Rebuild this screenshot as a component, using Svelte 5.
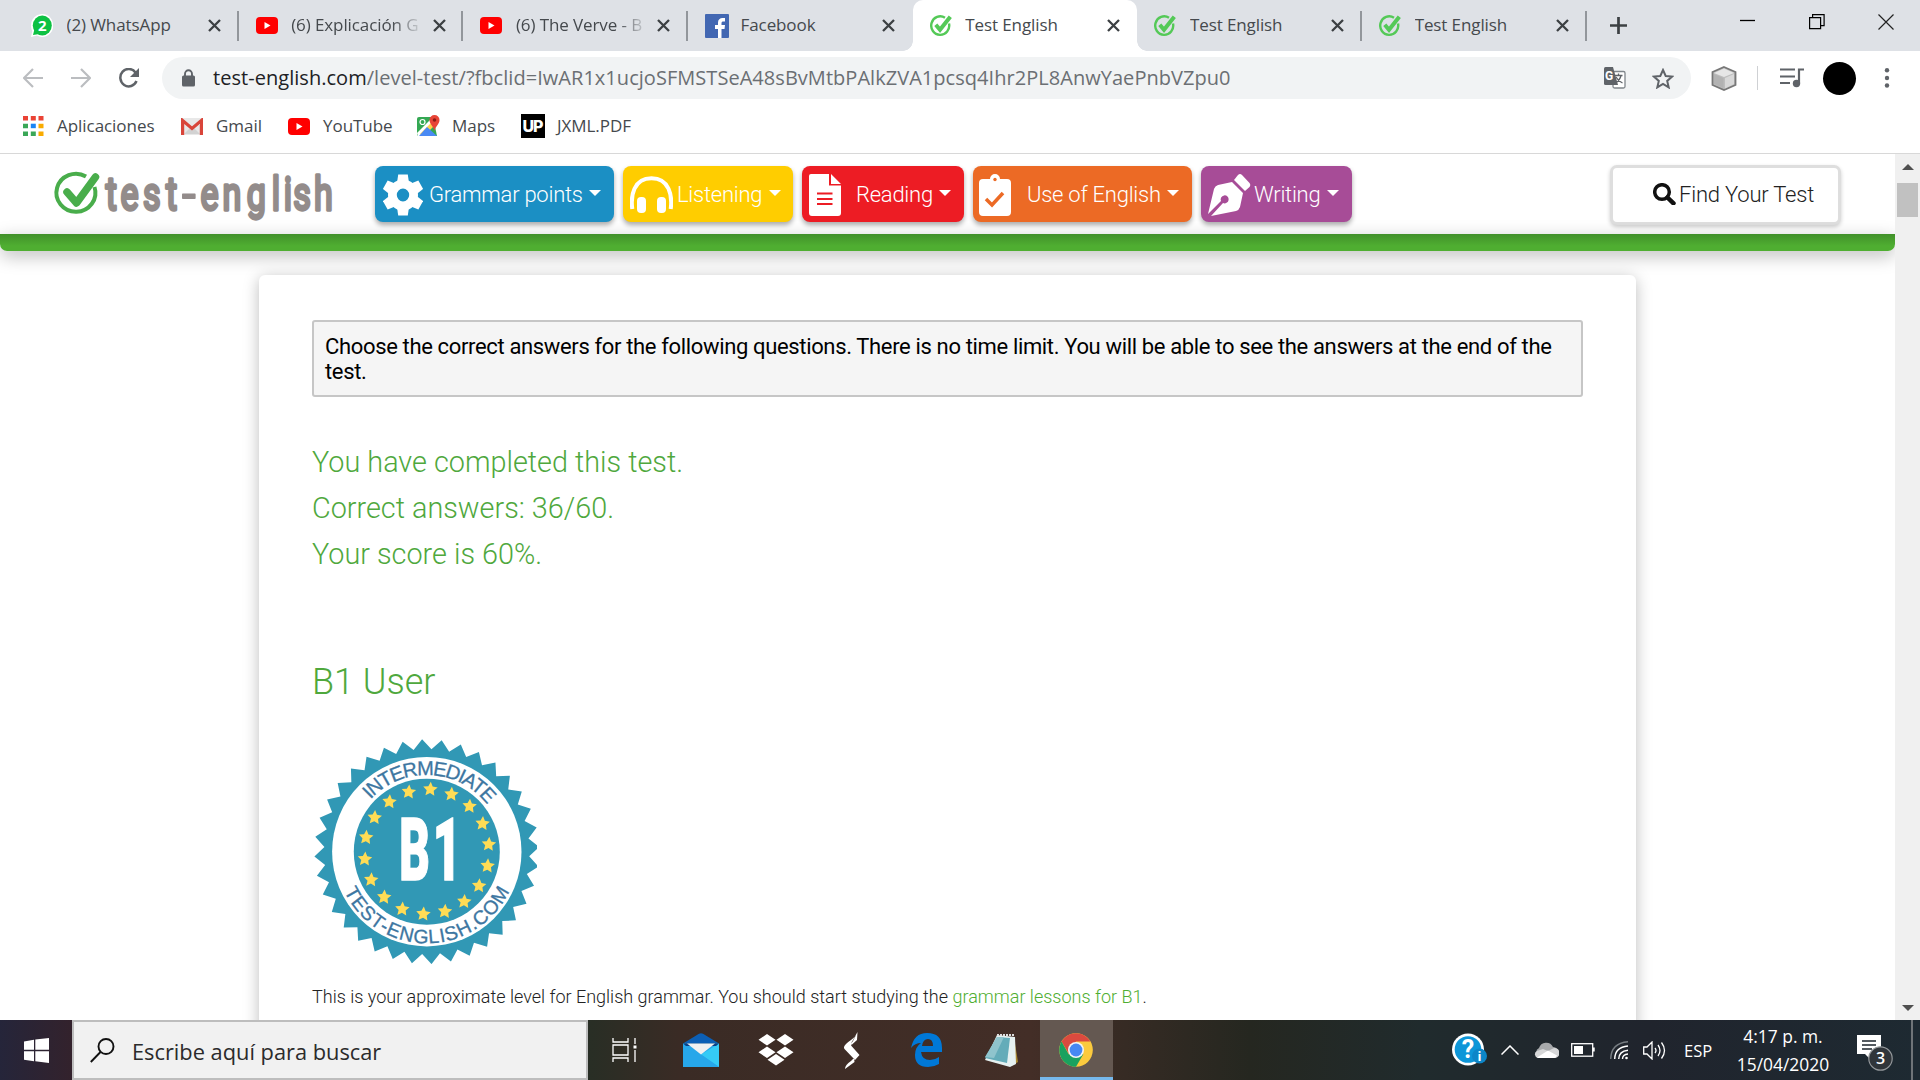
<script>
  const tabs = [
    { title: '(2) WhatsApp', icon: 'whatsapp', sep: true },
    { title: '(6) Explicación G', icon: 'youtube', sep: true, fade: true },
    { title: '(6) The Verve - B', icon: 'youtube', sep: true, fade: true },
    { title: 'Facebook', icon: 'facebook' },
    { title: 'Test English', icon: 'check', active: true },
    { title: 'Test English', icon: 'check', sep: true },
    { title: 'Test English', icon: 'check', sep: true }
  ];
  const bookmarks = [
    { label: 'Aplicaciones', icon: 'apps' },
    { label: 'Gmail', icon: 'gmail' },
    { label: 'YouTube', icon: 'youtube' },
    { label: 'Maps', icon: 'maps' },
    { label: 'JXML.PDF', icon: 'up' }
  ];
  const menu = [
    { label: 'Grammar points', kind: 'grammar' },
    { label: 'Listening', kind: 'listening' },
    { label: 'Reading', kind: 'reading' },
    { label: 'Use of English', kind: 'use' },
    { label: 'Writing', kind: 'writing' }
  ];
  const rad = Math.PI / 180;
  const polar = (r, deg) => [r * Math.sin(deg * rad), -r * Math.cos(deg * rad)];
  const pointList = (pts) => pts.map((p) => p.map((n) => n.toFixed(2)).join(',')).join(' ');
  const teeth = pointList(
    Array.from({ length: 72 }, (_, i) => polar(i % 2 ? 102.5 : 112.5, -2.4 + i * 5))
  );
  const star = pointList(Array.from({ length: 10 }, (_, i) => polar(i % 2 ? 3.7 : 7.6, i * 36)));
  const stars = Array.from({ length: 18 }, (_, i) => polar(62.4, 3.2 + i * 20));
  const gearTeeth = [0, 60, 120, 180, 240, 300];
</script>

{#snippet icon(name)}
  {#if name === 'whatsapp'}
    <svg width="22" height="24" viewBox="0 0 22 24">
      <path d="M11 0a11 11.5 0 1 1-5 21.6L0 23l1.300-6A11 11.500 0 0 1 11 0z" fill="#fff" />
      <ellipse cx="11.300" cy="11.500" rx="9.500" ry="10" fill="#0dc143" /><path d="M2 21l1.500-6 5 5z" fill="#0dc143" />
      <text x="11.300" y="17" text-anchor="middle" font-family="Open Sans" font-weight="700" font-size="15" fill="#fff">2</text>
    </svg>
  {:else if name === 'youtube'}
    <svg width="22" height="17" viewBox="0 0 22 17"><rect width="22" height="17" rx="4" fill="#f00" /><path d="M8.500 5v7l6-3.500z" fill="#fff" /></svg>
  {:else if name === 'facebook'}
    <svg width="24" height="24" viewBox="0 0 24 24"><rect width="24" height="24" rx="1" fill="#4267b2" /><path d="M13 24v-9h-3v-4h3V8.500C13 5.500 15 4 17.500 4H20v3.600h-1.600c-1.400 0-1.900.6-1.900 1.800V11H20l-.5 4h-3v9z" fill="#fff" /></svg>
  {:else if name === 'check'}
    <svg width="22" height="22" viewBox="0 0 22 22" fill="none" stroke="#54c957"><path d="M15 2.700A9 9.300 0 1 0 19 8.500" stroke-width="2.400" /><path d="M5.800 9.800l4.200 5L20.300 1.800" stroke-width="4" /></svg>
  {:else if name === 'apps'}
    <svg width="21" height="20" viewBox="0 0 21 20">
      <path d="M0 0h5v4.500H0zM7.800 0h5v4.500h-5zM15.500 0h5v4.500h-5z" fill="#ea4335" /><path d="M0 7.700h5v4.500H0zM0 15.400h5v4.500H0zM7.800 15.400h5v4.500h-5z" fill="#3aa757" /><path d="M7.800 7.700h5v4.500h-5z" fill="#1a84f5" /><path d="M15.500 7.700h5v4.500h-5zM15.500 15.400h5v4.500h-5z" fill="#f9ab00" />
    </svg>
  {:else if name === 'gmail'}
    <svg width="22" height="17" viewBox="0 0 22 17"><rect width="22" height="17" rx="1.500" fill="#e8e8e8" /><path d="M3 16l8-8 8 8z" fill="#d2d2d2" /><path d="M1.600 17V2.500L11 10.500l9.400-8V17" fill="none" stroke="#d9453a" stroke-width="3.200" /></svg>
  {:else if name === 'maps'}
    <svg width="23" height="23" viewBox="0 0 23 23">
      <path d="M2 2h14l4 19H2a2 2 0 0 1-2-2V4a2 2 0 0 1 2-2z" fill="#34a853" /><path d="M0 18L14 4l4 4L4 21H1z" fill="#fff" /><path d="M3 19L16 6l2 4L7 21z" fill="#ffd04c" /><path d="M10 12l10 9H2z" fill="#4a8af4" />
      <path d="M17.500 0a5 5 0 0 1 5 5c0 4-4 6-5 11-1-5-5-7-5-11a5 5 0 0 1 5-5z" fill="#e84436" /><circle cx="17.500" cy="5" r="1.800" fill="#8c1c16" /><circle cx="5.500" cy="7" r="2.500" fill="none" stroke="#fff" stroke-width="1.200" />
    </svg>
  {:else if name === 'up'}
    <svg width="24" height="24" viewBox="0 0 24 24"><rect width="24" height="24" /><text x="12" y="18" text-anchor="middle" font-family="Inter" font-weight="800" font-size="16" fill="#fff" textLength="21">UP</text></svg>
  {:else if name === 'grammar'}
    <svg width="40" height="42" viewBox="-20 -21 40 42" fill="#fff">
      {#each gearTeeth as a}<path d="M-6-12L-4.800-20.500H4.800L6-12z" transform="rotate({a})" />{/each}
      <path fill-rule="evenodd" d="M0-15.500a15 15.500 0 1 1 0 31a15 15.500 0 1 1 0-31zM0-6.500a6.200 6.500 0 1 0 0 13a6.200 6.500 0 1 0 0-13z" />
    </svg>
  {:else if name === 'listening'}
    <svg width="43" height="38" viewBox="0 0 43 38"><path d="M2.300 33C.5 20 3.500 2.300 21.500 2.300S42.500 20 40.700 33" fill="none" stroke="#fff" stroke-width="4" /><rect x="7" y="21" width="9" height="16" rx="4" fill="#fff" /><rect x="27" y="21" width="9" height="16" rx="4" fill="#fff" /></svg>
  {:else if name === 'reading'}
    <svg width="32" height="42" viewBox="0 0 32 42"><path d="M2 0h18v11.500h12V39a3 3 0 0 1-3 3H3a3 3 0 0 1-3-3V2q0-2 2-2zM22 0l10 10H22z" fill="#fff" /><path d="M8 19.500h15.500M8 25h15.500M8 30h15.500" stroke="#ec1c24" stroke-width="2.200" /></svg>
  {:else if name === 'use'}
    <svg width="32" height="42" viewBox="0 0 32 42"><path d="M4 5h7a5 5 0 0 1 10 0h7a4 4 0 0 1 4 4v29a4 4 0 0 1-4 4H4a4 4 0 0 1-4-4V9a4 4 0 0 1 4-4z" fill="#fff" /><circle cx="16" cy="5.500" r="1.700" fill="#ec6a25" /><path d="M7 25l6 6 11-12" fill="none" stroke="#ec6a25" stroke-width="3.500" /></svg>
  {:else if name === 'writing'}
    <svg width="43" height="42" viewBox="0 0 43 42" fill="#fff"><path d="M30 1q2-2 4 0l7.500 8q1.500 2 0 4L37 17 26 6z" /><path fill-rule="evenodd" d="M24 8l11 11-3 14q-1 3-4 4L3 42l12-13a4 4 0 1 0-2-2L0 40 6 15q1-3 4-4z" /></svg>
  {/if}
{/snippet}

<div class="screen">
  <div class="tabstrip">
    {#each tabs as tab}
      <div class="tab" class:active={tab.active} class:sep={tab.sep}>
        <span class="favicon">{@render icon(tab.icon)}</span>
        <span class="title" class:fade={tab.fade}>{tab.title}</span>
        <svg class="close" width="13" height="13" viewBox="0 0 13 13"><path d="M1 1l11 11M12 1L1 12" stroke="#3c4043" stroke-width="2.300" /></svg>
      </div>
    {/each}
    <svg class="newtab" width="19" height="19" viewBox="0 0 19 19"><path d="M9.500 1v17M1 9.500h17" stroke="#3c4043" stroke-width="2.700" /></svg>
    <div class="window-controls">
      <svg width="16" height="16" viewBox="0 0 16 16"><path d="M0 6.500h15" stroke="#000" stroke-width="1.300" /></svg>
      <svg width="16" height="16" viewBox="0 0 16 16" fill="none" stroke="#000" stroke-width="1.200"><path d="M.6 3.600h11v11H.6zM3.600 3.600V.6h11.500v11h-3.500" /></svg>
      <svg width="16" height="16" viewBox="0 0 16 16"><path d="M.5.5l15 15M15.500.5l-15 15" stroke="#222" stroke-width="1.200" /></svg>
    </div>
  </div>

  <div class="toolbar">
    <svg class="back" width="20" height="20" viewBox="0 0 20 20"><path d="M20 10H2M10 1l-9 9 9 9" fill="none" stroke="#bbbdc0" stroke-width="2.200" /></svg>
    <svg class="forward" width="20" height="20" viewBox="0 0 20 20"><path d="M0 10h18M10 1l9 9-9 9" fill="none" stroke="#bbbdc0" stroke-width="2.200" /></svg>
    <svg class="reload" width="22" height="20" viewBox="0 0 22 20"><path d="M17.500 4.500A8.400 8.700 0 1 0 18.500 13" fill="none" stroke="#5f6368" stroke-width="2.500" /><path d="M21 0v9h-9z" fill="#5f6368" /></svg>
    <div class="omnibox">
      <svg width="14" height="18" viewBox="0 0 14 18"><rect y="6.500" width="13" height="11" rx="1.500" fill="#5f6368" /><path d="M3 7V5a3.500 3.700 0 0 1 7 0v2" fill="none" stroke="#5f6368" stroke-width="1.900" /></svg>
      <span class="url"><b>test-english.com</b>/level-test/?fbclid=IwAR1x1ucjoSFMSTSeA48sBvMtbPAlkZVA1pcsq4Ihr2PL8AnwYaePnbVZpu0</span>
      <svg class="translate" width="22" height="22" viewBox="0 0 22 22">
        <rect x="9" y="4.500" width="12" height="16.500" rx="1.500" fill="#fff" stroke="#80868b" stroke-width="1.300" /><path d="M1.500 0H9l5 18H1.500Q0 18 0 16.500v-15Q0 0 1.500 0z" fill="#5f6368" />
        <text x="1" y="13" font-family="Roboto" font-weight="700" font-size="12" fill="#fff">G</text>
        <path d="M10.500 8.500h8M14.500 6.500v2M17 8.500q-1 5-6 7.500M12 10q2 4 6.500 6" fill="none" stroke="#5f6368" stroke-width="1.300" />
      </svg>
      <svg class="bookmark-star" width="22" height="21" viewBox="0 0 22 21"><path d="M11 2l2.700 6 6.500.6-5 4.300 1.500 6.500L11 16l-5.700 3.400 1.500-6.500-5-4.300 6.500-.6z" fill="none" stroke="#5f6368" stroke-width="2" /></svg>
    </div>
    <svg class="cube" width="26" height="25" viewBox="0 0 26 25"><path d="M13 1l11.500 5v13L13 24 1.500 19V6z" fill="#bdbdbd" stroke="#777" stroke-width="1.800" /><path d="M13 2.500L23 7 13 11 3 7z" fill="#e6e6e6" /><path d="M14 12l9-4v10l-9 4.500z" fill="#d8d8d8" /><path d="M3 8l9.500 4v10L3 18z" fill="#b2b2b2" /></svg>
    <span class="divider"></span>
    <svg class="music" width="24" height="20" viewBox="0 0 24 20"><path d="M0 1.500h15M0 8.500h15M0 15h10M19 15V1.500h5" fill="none" stroke="#5f6368" stroke-width="2.200" /><circle cx="16.500" cy="15.500" r="3.700" fill="#5f6368" /></svg>
    <span class="avatar"></span>
    <svg class="dots" width="6" height="20" viewBox="0 0 6 20" fill="#5f6368"><circle cx="3" cy="2.300" r="2.200" /><circle cx="3" cy="10" r="2.200" /><circle cx="3" cy="17.500" r="2.200" /></svg>
  </div>

  <div class="bookmarks">
    {#each bookmarks as item}
      <div class="bookmark {item.icon}"><span class="bm-icon">{@render icon(item.icon)}</span><span>{item.label}</span></div>
    {/each}
  </div>

  <div class="viewport">
    <div class="page">
      <header>
        <svg class="logo" width="290" height="66" viewBox="0 0 290 66">
          <path d="M31 9.500A19.500 19 0 1 0 39.500 20" fill="none" stroke="#49ad4b" stroke-width="4" />
          <path d="M12 25l9.500 11L40.500 10" fill="none" stroke="#49ad4b" stroke-width="7.500" stroke-linecap="round" stroke-linejoin="round" />
          <text class="wordmark" transform="scale(.74 1)" y="43.500" x="68.500 88.500 119 150 171 196.500 226.500 259 293 309 322 350">test<tspan class="dash" dy="7">-</tspan><tspan dy="-7">english</tspan></text>
        </svg>
        <nav>
          {#each menu as item}
            <button class={item.kind}><span class="menu-icon">{@render icon(item.kind)}</span><span class="menu-label">{item.label}</span><i class="caret"></i></button>
          {/each}
        </nav>
        <button class="find">
          <svg width="23" height="22" viewBox="0 0 23 22"><circle cx="9" cy="9" r="7.300" fill="none" stroke="#111" stroke-width="3.500" /><path d="M14.500 14.500l6 5.800" stroke="#111" stroke-width="4.500" stroke-linecap="round" /></svg>
          <span>Find Your Test</span>
        </button>
      </header>
      <div class="green-bar"></div>
      <main>
        <p class="instructions">Choose the correct answers for the following questions. There is no time limit. You will be able to see the answers at the end of the<br />test.</p>
        <div class="results">
          <p>You have completed this test.</p>
          <p>Correct answers: 36/60.</p>
          <p>Your score is 60%.</p>
        </div>
        <h2>B1 User</h2>
        <svg class="badge" width="225" height="225" viewBox="-114.800 -112.700 225 225">
          <defs><path id="arcTop" d="M-76.700 0A76.700 76.700 0 0 1 76.700 0" transform="rotate(2.500)" /><path id="arcBottom" d="M-91.700 0A91.700 91.700 0 0 0 91.700 0" /></defs>
          <polygon points={teeth} fill="#3198b5" />
          <circle r="94.700" fill="#fff" /><circle r="73" fill="#3198b5" />
          {#each stars as [x, y]}<polygon points={star} transform="translate({x} {y}) rotate(4)" fill="#ffdc55" />{/each}
          <text class="ring" font-size="20" text-anchor="middle"><textPath href="#arcTop" startOffset="50%" textLength="133">INTERMEDIATE</textPath></text>
          <text class="ring" font-size="19.500" text-anchor="middle"><textPath href="#arcBottom" startOffset="50%" textLength="206">TEST-ENGLISH.COM</textPath></text>
          <g class="level" font-size="88"><text transform="translate(-27.500 28.500) scale(.54 1)">B</text><text transform="translate(6 28.500) scale(.56 1)">1</text></g>
        </svg>
        <p class="note">This is your approximate level for English grammar. You should start studying the <a>grammar lessons for B1</a>.</p>
      </main>
    </div>
    <div class="scrollbar"><i class="up-arrow"></i><span class="thumb"></span><i class="down-arrow"></i></div>
  </div>

  <div class="taskbar">
    <div class="start"><svg width="25" height="25" viewBox="0 0 25 25" fill="#fff"><path d="M0 3.500l10-1.700v10H0zM11.300 1.600L25 0v11.800H11.300zM0 13.200h10v10L0 21.700zM11.300 13.200H25V25l-13.700-1.700z" /></svg></div>
    <div class="search">
      <svg width="25" height="25" viewBox="0 0 25 25" fill="none" stroke="#111" stroke-width="1.900"><circle cx="16" cy="8.500" r="7.500" /><path d="M10.500 14L.8 24" /></svg>
      <span>Escribe aquí para buscar</span>
    </div>
    <div class="apps">
      <div class="app"><svg width="26" height="24" viewBox="0 0 26 24" fill="none" stroke="#fff" stroke-width="1.300"><path d="M1 0v4h15V0M1 7h15v10H1zM1 24v-4h15v4M23 0v6M23 12v12" /><path d="M21.500 7.500h3v3h-3z" fill="#fff" stroke="none" /></svg></div>
      <div class="app"><svg width="36" height="34" viewBox="0 0 36 34"><path d="M0 10.500L16 .8q2-1.200 4 0l16 9.700z" fill="#0c5fb5" /><path d="M0 10.500h36V34H0z" fill="#27a7ea" /><path d="M36 10.500V34L18 21.500z" fill="#35cbf6" /><path d="M18 21.500L36 34H0V10.500z" fill="#27a7ea" /><path d="M0 10.500h36L33 13H3z" fill="#0a3f86" /><path d="M4 10.500h28L18 21.500z" fill="#f1f1f1" /></svg></div>
      <div class="app"><svg width="36" height="32" viewBox="0 0 36 32" fill="#fff"><path d="M9 0l8.500 5.800L9 11.500.5 5.800zM27 0l8.500 5.800-8.500 5.700-8.500-5.700zM9 12.500l8.500 5.800L9 24 .5 18.300zM27 12.500l8.500 5.800L27 24l-8.500-5.700zM18 20l8.500 5.800-8.500 5.700-8.500-5.700z" /></svg></div>
      <div class="app"><svg width="17" height="37" viewBox="0 0 17 37" fill="#fff"><path d="M14.500 0q-1 4-6.500 8-9 6-6.500 9L12 28l4.500-5-8-9q-1.500-2 1.500-5zM14.500 0l-.5 8-5.500 5q-1-2 1.500-5zM2 37q0-4 6-8l3-3 .5 4z" /></svg></div>
      <div class="app"><svg width="31" height="34" viewBox="0 0 31 34"><path d="M0 15Q3 0 16 0q15 0 15 15v4H10q1 8 9 8 5 0 9-3v7q-5 3-11 3Q4 34 4 22q0-8 6-12-6 0-10 5zm11-2h11q0-7-5-7-5 0-6 7z" fill="#0078d7" fill-rule="evenodd" /></svg></div>
      <div class="app"><svg width="35" height="33" viewBox="0 0 35 33"><path d="M29 3l4 25-5 3z" fill="#a88731" /><path d="M12 1l18 2 1 27-6 3L0 26z" fill="#e6f1f1" /><path d="M12 3l13 1-3 25L0 24z" fill="#64acb9" /><path d="M12 3h7L9 24l-9-1z" fill="#8fc4cd" /><path d="M12 1h17" stroke="#dedede" stroke-width="2" stroke-dasharray="2 1" /></svg></div>
      <div class="app current"><svg width="34" height="34" viewBox="-17 -17 34 34"><circle r="16.800" fill="#fbca3e" /><path d="M-14.500-8.400A16.800 16.800 0 0 1 14.500-8.400H0L-7 4z" fill="#db4a3f" /><path d="M-14.500-8.400A16.800 16.800 0 0 0 0 16.800L7.300 4.200-7.300 4.200z" fill="#1aa15f" /><circle r="8" fill="#f4f4f4" /><circle r="6.400" fill="#4688f2" /></svg></div>
    </div>
    <div class="tray">
      <svg width="35" height="34" viewBox="0 0 35 34"><circle cx="16" cy="16.500" r="16" fill="#fff" /><circle cx="16" cy="16.500" r="13.300" fill="#0d96d8" /><text x="16" y="25" text-anchor="middle" font-family="Roboto" font-weight="700" font-size="25" fill="#fff">?</text><circle cx="27.500" cy="23" r="7.500" fill="#0d86c8" /><text x="27.500" y="28" text-anchor="middle" font-family="Open Sans" font-weight="700" font-size="13" fill="#fff">i</text></svg>
      <svg class="chev" width="18" height="10" viewBox="0 0 18 10"><path d="M.5 9.500L9 1l8.500 8.500" fill="none" stroke="#fff" stroke-width="1.500" /></svg>
      <svg class="cloud" width="25" height="16" viewBox="0 0 25 16"><path d="M5 15a5 5 0 0 1 0-9 7.500 7.500 0 0 1 14-1 5 5 0 0 1 5 6z" fill="#a7a9ab" /><path d="M4 16a3.700 3.700 0 0 1-1-7l6-2 5 2 6-3a5 5 0 0 1 1 10z" fill="#d6d7d8" /><path d="M3 15.500l11-7 9 5q-1 2.500-3 2.500H4z" fill="#fff" /></svg>
      <svg class="battery" width="24" height="14" viewBox="0 0 24 14"><rect x=".7" y=".7" width="21" height="12.500" fill="none" stroke="#fff" stroke-width="1.300" /><path d="M3 3h9v8H3zM22 4.500h1.700v4H22z" fill="#fff" /></svg>
      <svg class="wifi" width="19" height="19" viewBox="0 0 19 19" fill="none" stroke="#fff" stroke-width="1.400"><path d="M.7 18Q1 2 18 .7" stroke="#777d82" /><path d="M4.700 18Q5 6 18 5M8.700 18Q9 10 18 9.200M12.500 18q0-4.500 5.500-5" /><circle cx="16.500" cy="17" r="1.300" fill="#fff" stroke="none" /></svg>
      <svg class="sound" width="23" height="19" viewBox="0 0 23 19" fill="none" stroke="#fff" stroke-width="1.300"><path d="M.7 6H4l5-5v17l-5-5H.7zM12 7q2 2.500 0 5M15 4q4 5.500 0 11M18.500 1.500q6 8 0 16" /></svg>
      <span class="lang">ESP</span>
      <div class="clock"><span>4:17 p. m.</span><span class="date">15/04/2020</span></div>
      <svg class="notif" width="37" height="36" viewBox="0 0 37 36"><path d="M0 0h24v19H13v5l-5-5H0z" fill="#fff" /><path d="M5 6h14M5 10h14M5 14h10" stroke="#1d252d" stroke-width="1.300" /><circle cx="23.500" cy="23.500" r="11.700" fill="#30353a" stroke="#93979a" stroke-width="1.200" /><text x="23.500" y="29" text-anchor="middle" font-family="Open Sans" font-weight="600" font-size="16" fill="#fff">3</text></svg>
      <i class="desktop-line"></i>
    </div>
  </div>
</div>

<style>
  :global(body) { margin: 0; overflow: hidden; background: #fff; }
  .screen, .screen * { box-sizing: border-box; }
  .screen { width: 1920px; height: 1080px; display: flex; flex-direction: column; font-family: 'Open Sans', sans-serif; white-space: nowrap; overflow: hidden; }
  svg { display: block; flex: none; }
  p, h2 { margin: 0; }

  .tabstrip { height: 51px; flex: none; background: #dee1e6; display: flex; align-items: center; padding-left: 14px; }
  .tab { position: relative; width: 224.700px; height: 51px; flex: none; display: flex; align-items: center; padding: 0 17px; }
  .tab.sep::after { content: ''; position: absolute; right: 0; top: 11px; width: 2px; height: 30px; background: #92969b; }
  .tab.active { background: #fff; border-radius: 10px 10px 0 0; }
  .tab.active::before, .tab.active::after { content: ''; position: absolute; bottom: 0; width: 10px; height: 10px; }
  .tab.active::before { right: 100%; background: radial-gradient(circle at 0 0, #dee1e6 9.500px, #fff 10px); }
  .tab.active::after { left: 100%; background: radial-gradient(circle at 100% 0, #dee1e6 9.500px, #fff 10px); }
  .favicon { width: 35.500px; }
  .title { width: 129px; margin: -1px 12.500px 0 0; font-size: 17px; letter-spacing: -.1px; line-height: 24px; color: #45494d; overflow: hidden; }
  .title.fade { mask-image: linear-gradient(90deg, #000 78%, transparent 103%); }
  .newtab { margin: 0 0 0 22px; }
  .window-controls { display: flex; gap: 53px; margin: -8px 0 0 112px; }

  .toolbar { height: 54px; flex: none; display: flex; align-items: center; padding-left: 23px; }
  .forward { margin-left: 28px; }
  .reload { margin-left: 27px; }
  .omnibox { width: 1529px; height: 42px; margin-left: 22px; border-radius: 21px; background: #f1f3f4; display: flex; align-items: center; padding-left: 20px; }
  .url { width: 1391px; margin: -1px 0 0 17px; font-size: 20px; letter-spacing: .04px; color: #6b6f73; }
  .url b { font-weight: 400; color: #202124; }
  .bookmark-star { margin-left: 26px; }
  .cube { margin-left: 20px; }
  .divider { width: 1px; height: 24px; margin-left: 20px; background: #cfd1d4; }
  .music { margin-left: 22px; }
  .avatar { width: 33px; height: 33px; margin-left: 19px; border-radius: 50%; background: #000; }
  .dots { margin-left: 28px; }

  .bookmarks { height: 48px; flex: none; display: flex; padding: 0 0 6px 23px; font-size: 17px; letter-spacing: -.05px; color: #45494d; }
  .bookmark { display: flex; align-items: center; width: 107px; }
  .bookmark span + span { margin-top: -1px; }
  .bookmark.apps { width: 158px; }
  .bookmark.apps .bm-icon { width: 34px; }
  .bookmark.youtube { width: 129px; }
  .bookmark.maps { width: 104px; }
  .bm-icon { width: 35px; flex: none; }
  .bookmark.up .bm-icon { width: 36px; }

  .viewport { height: 867px; flex: none; border-top: 1px solid #d8d8d8; display: flex; overflow: hidden; }
  .page { width: 1895px; font-family: Roboto, sans-serif; display: flex; flex-direction: column; align-items: center; }
  header { width: 1895px; height: 80px; flex: none; display: flex; align-items: flex-start; background: #fff; }
  .logo { margin: 13px 0 0 55px; overflow: visible; }
  .wordmark { font-family: Roboto, sans-serif; font-size: 46px; fill: #938c8b; stroke: #938c8b; stroke-width: 3.400px; stroke-linejoin: round; }
  .dash { font-size: 70px; font-weight: 300; stroke-width: 2px; }
  nav { display: flex; gap: 9px; margin: 12px 0 0 30px; }
  button { border: 0; font-family: inherit; padding: 0; }
  nav button { height: 56px; border-radius: 8px; color: #fff; display: flex; align-items: center; font-size: 22px; letter-spacing: -.25px; font-weight: 300; box-shadow: 0 3px 5px #0005; }
  nav .grammar { width: 239px; padding-left: 8px; background: #1b8fc4; }
  nav .listening { width: 170px; padding-left: 7px; background: #ffcd00; }
  nav .reading { width: 162px; padding-left: 7px; background: #ed1c24; }
  nav .use { width: 219px; padding-left: 6px; background: #ec6a25; }
  nav .writing { width: 151px; padding-left: 7px; background: #a74c97; }
  .grammar .menu-icon { width: 46px; }
  .listening .menu-icon { width: 47px; }
  .reading .menu-icon { width: 47px; }
  .use .menu-icon { width: 48px; }
  .writing .menu-icon { width: 46px; }
  .menu-icon { padding-top: 2px; flex: none; }
  .menu-label { text-align: left; }
  .caret { margin: -3px 0 0 6.500px; border: 6.500px solid transparent; border-top-color: #fff; border-bottom: 0; }
  .find { width: 231px; height: 60px; margin: 11px 0 0 258px; border: 3px solid #dedede; border-radius: 7px; background: #fff; box-shadow: 0 2px 4px #0003; color: #222; display: flex; align-items: center; padding: 0 0 2px 40px; font-size: 22px; letter-spacing: -.2px; font-weight: 300; }
  .find span { margin-left: 3px; }
  .green-bar { width: 1895px; height: 17px; flex: none; border-radius: 0 0 7px 7px; background: linear-gradient(#41902a, #4fae31 70%); box-shadow: 0 5px 18px #0004; }
  main { width: 1377px; height: 770px; flex: none; margin-top: 24px; padding: 45px 53px 0; border-radius: 6px; background: #fff; box-shadow: 0 3px 16px #0004; position: relative; }
  .instructions { height: 77px; border: 2px solid #c6c6c6; border-radius: 3px; background: #f5f5f5; padding: 12px 11px; font-size: 22px; letter-spacing: -.35px; line-height: 25px; color: #000; }
  .results { margin-top: 42px; font-size: 28.800px; line-height: 46px; font-weight: 300; color: #4fa83d; }
  h2 { margin-top: 82px; font-size: 36px; line-height: 46px; font-weight: 300; color: #4fa83d; }
  .badge { margin: 34px 0 0; }
  .ring { font-family: 'Liberation Sans', sans-serif; fill: #3d76a1; stroke: #3d76a1; stroke-width: .3px; }
  .level { font-family: Roboto, sans-serif; font-weight: 900; fill: #fff; stroke: #fff; stroke-width: 1.500px; }
  .note { margin-top: 20px; font-size: 18px; line-height: 26px; font-weight: 300; color: #222; }
  .note a { color: #4fae31; }

  .scrollbar { width: 25px; background: #f0f0f0; display: flex; flex-direction: column; align-items: center; padding: 10px 0; }
  .up-arrow { border: 6px solid transparent; border-top: 0; border-bottom-color: #505050; }
  .thumb { width: 21px; height: 34px; margin-top: 13px; background: #c1c1c1; }
  .down-arrow { margin-top: auto; margin-bottom: -1px; border: 6px solid transparent; border-bottom: 0; border-top-color: #505050; }

  .taskbar { height: 60px; flex: none; display: flex; background: linear-gradient(90deg, #25253a 0, #33222c 72px, #282e25 588px, #3a2b25 680px, #432e27 1030px, #252720 1250px, #202b2d 1420px, #20242d 1650px, #1e2a32 1920px); }
  .start { width: 72px; display: flex; align-items: center; justify-content: center; }
  .search { width: 516px; border: 2px solid #bdbdbd; background: #f1f1f1; display: flex; align-items: center; padding-left: 16px; font-size: 21.800px; color: #2b2b2b; }
  .search span { margin-left: 17px; padding-top: 2px; }
  .apps { display: flex; }
  .app { width: 75.400px; display: flex; align-items: center; justify-content: center; padding-right: 1px; }
  .app.current { width: 73px; background: #645851; border-bottom: 3px solid #76b9ed; padding: 3px 2px 0 0; }
  .tray { display: flex; align-items: center; margin-left: auto; color: #fff; width: 468px; flex: none; }
  .chev { margin-left: 14px; }
  .cloud { margin-left: 15px; }
  .battery { margin-left: 12px; }
  .wifi { margin-left: 15px; }
  .sound { margin-left: 14px; }
  .lang { width: 30px; margin-left: 18px; font-size: 16.500px; }
  .clock { width: 98px; margin-left: 20px; display: flex; flex-direction: column; align-items: center; font-size: 17.400px; line-height: 28px; }
  .notif { margin: 6px 0 0 25px; }
  .desktop-line { width: 2px; height: 60px; margin-left: 17px; background: #6f7478; }
</style>
